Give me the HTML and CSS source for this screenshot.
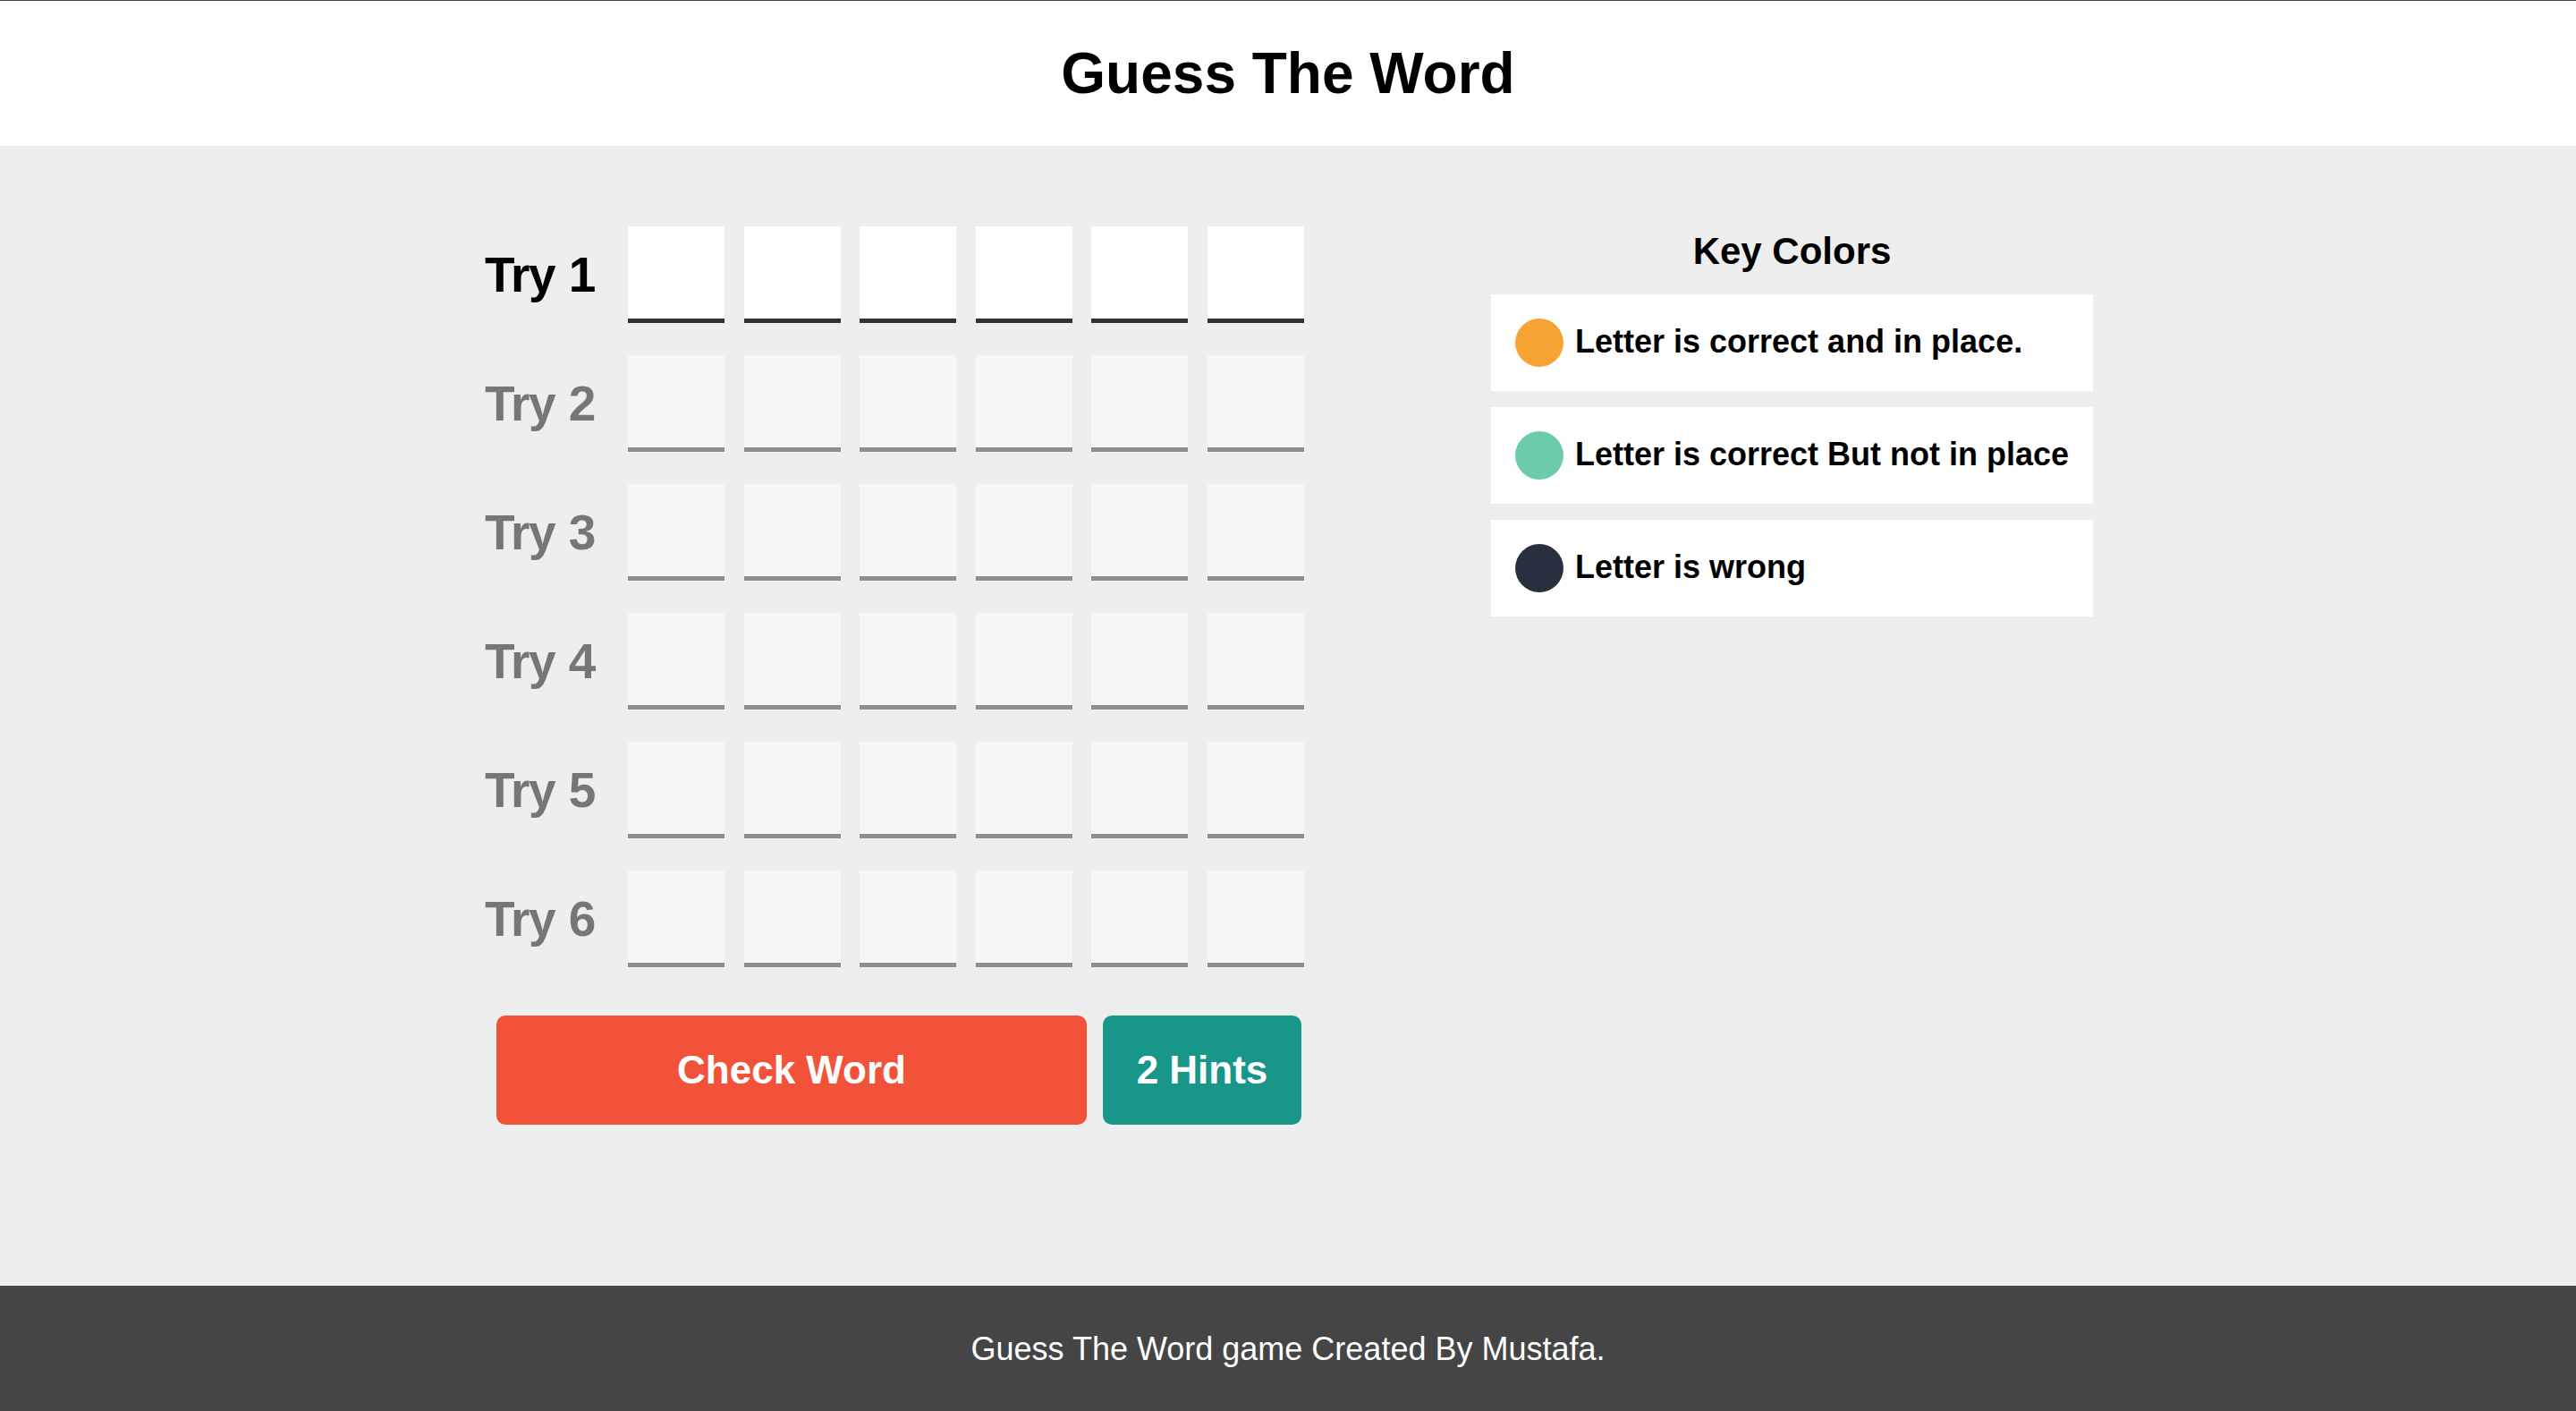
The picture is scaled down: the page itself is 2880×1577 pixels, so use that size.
FILE: index.html
```html
<!DOCTYPE html>
<html lang="en">
<head>
<meta charset="utf-8">
<title>Guess The Word</title>
<link rel="stylesheet" href="styles.css">
</head>
<body>
<header class="site-header">
  <h1 class="site-title">Guess The Word</h1>
</header>
<main class="game-main">
  <section class="game-area">
    <div class="inputs">
      <div class="try-row">
        <span class="try-label">Try 1</span>
        <div class="letters">
          <input class="letter" type="text" maxlength="1">
          <input class="letter" type="text" maxlength="1">
          <input class="letter" type="text" maxlength="1">
          <input class="letter" type="text" maxlength="1">
          <input class="letter" type="text" maxlength="1">
          <input class="letter" type="text" maxlength="1">
        </div>
      </div>
      <div class="try-row disabled">
        <span class="try-label">Try 2</span>
        <div class="letters">
          <input class="letter" type="text" maxlength="1" disabled>
          <input class="letter" type="text" maxlength="1" disabled>
          <input class="letter" type="text" maxlength="1" disabled>
          <input class="letter" type="text" maxlength="1" disabled>
          <input class="letter" type="text" maxlength="1" disabled>
          <input class="letter" type="text" maxlength="1" disabled>
        </div>
      </div>
      <div class="try-row disabled">
        <span class="try-label">Try 3</span>
        <div class="letters">
          <input class="letter" type="text" maxlength="1" disabled>
          <input class="letter" type="text" maxlength="1" disabled>
          <input class="letter" type="text" maxlength="1" disabled>
          <input class="letter" type="text" maxlength="1" disabled>
          <input class="letter" type="text" maxlength="1" disabled>
          <input class="letter" type="text" maxlength="1" disabled>
        </div>
      </div>
      <div class="try-row disabled">
        <span class="try-label">Try 4</span>
        <div class="letters">
          <input class="letter" type="text" maxlength="1" disabled>
          <input class="letter" type="text" maxlength="1" disabled>
          <input class="letter" type="text" maxlength="1" disabled>
          <input class="letter" type="text" maxlength="1" disabled>
          <input class="letter" type="text" maxlength="1" disabled>
          <input class="letter" type="text" maxlength="1" disabled>
        </div>
      </div>
      <div class="try-row disabled">
        <span class="try-label">Try 5</span>
        <div class="letters">
          <input class="letter" type="text" maxlength="1" disabled>
          <input class="letter" type="text" maxlength="1" disabled>
          <input class="letter" type="text" maxlength="1" disabled>
          <input class="letter" type="text" maxlength="1" disabled>
          <input class="letter" type="text" maxlength="1" disabled>
          <input class="letter" type="text" maxlength="1" disabled>
        </div>
      </div>
      <div class="try-row disabled">
        <span class="try-label">Try 6</span>
        <div class="letters">
          <input class="letter" type="text" maxlength="1" disabled>
          <input class="letter" type="text" maxlength="1" disabled>
          <input class="letter" type="text" maxlength="1" disabled>
          <input class="letter" type="text" maxlength="1" disabled>
          <input class="letter" type="text" maxlength="1" disabled>
          <input class="letter" type="text" maxlength="1" disabled>
        </div>
      </div>
    </div>
    <div class="control">
      <button class="btn btn-check" type="button">Check Word</button>
      <button class="btn btn-hint" type="button">2 Hints</button>
    </div>
  </section>
  <aside class="key-colors">
    <h2 class="key-title">Key Colors</h2>
    <div class="key-list">
      <div class="key-colors-item">
        <span class="key-dot dot-in-place"></span>
        <span class="key-text">Letter is correct and in place.</span>
      </div>
      <div class="key-colors-item">
        <span class="key-dot dot-not-in-place"></span>
        <span class="key-text">Letter is correct But not in place</span>
      </div>
      <div class="key-colors-item">
        <span class="key-dot dot-wrong"></span>
        <span class="key-text">Letter is wrong</span>
      </div>
    </div>
  </aside>
</main>
<footer class="site-footer">Guess The Word game Created By Mustafa.</footer>
</body>
</html>
```

FILE: styles.css
```css
* {
  box-sizing: border-box;
}

html, body {
  margin: 0;
  padding: 0;
}

body {
  font-family: "Liberation Sans", Arial, sans-serif;
  background-color: #eeeeee;
  color: #000;
  min-height: 100vh;
  display: flex;
  flex-direction: column;
}

.site-header {
  background-color: #ffffff;
  border-top: 1px solid #4a4a4a;
  height: 163px;
  display: flex;
  align-items: center;
  justify-content: center;
}

.site-title {
  margin: 0;
  font-size: 64px;
  font-weight: bold;
  line-height: 1;
  padding-top: 0;
}

.game-main {
  flex: 1;
  display: flex;
  justify-content: center;
  align-items: flex-start;
  gap: 209px;
  padding-top: 90px;
}

.game-area {
  width: 918px;
  flex: none;
}

.inputs {
  display: flex;
  flex-direction: column;
  gap: 36px;
}

.try-row {
  display: flex;
  align-items: center;
}

.try-row.disabled {
  opacity: 0.5;
}

.try-label {
  width: 162px;
  flex: none;
  font-size: 55px;
  font-weight: bold;
  line-height: 1;
  letter-spacing: -1.5px;
  word-spacing: 2px;
  padding-left: 2px;
}

.letters {
  display: flex;
  gap: 21.6px;
}

.letter {
  width: 108px;
  height: 108px;
  margin: 0;
  padding: 0;
  border: none;
  border-bottom: 5px solid #333333;
  border-radius: 0;
  background-color: #ffffff;
  font-family: inherit;
  font-size: 60px;
  font-weight: bold;
  text-align: center;
  color: #000;
  outline: none;
}

.control {
  display: flex;
  gap: 18px;
  margin-top: 54px;
  margin-left: 15px;
}

.btn {
  height: 122px;
  border: none;
  border-radius: 10px;
  color: #ffffff;
  font-family: inherit;
  font-size: 44px;
  font-weight: bold;
  padding: 0;
  cursor: pointer;
}

.btn-check {
  width: 660px;
  background-color: #f3523a;
}

.btn-hint {
  width: 222px;
  background-color: #18968a;
}

.key-colors {
  width: 673px;
  flex: none;
}

.key-title {
  margin: 4px 0 24px;
  font-size: 42px;
  font-weight: bold;
  line-height: 48px;
  text-align: center;
}

.key-list {
  display: flex;
  flex-direction: column;
  gap: 18px;
}

.key-colors-item {
  background-color: #ffffff;
  height: 108px;
  padding-left: 27px;
  display: flex;
  align-items: center;
  gap: 13px;
}

.key-dot {
  width: 54px;
  height: 54px;
  border-radius: 50%;
  flex: none;
}

.dot-in-place {
  background-color: #f7a333;
}

.dot-not-in-place {
  background-color: #6dcbad;
}

.dot-wrong {
  background-color: #28303f;
}

.key-text {
  font-size: 36px;
  font-weight: bold;
  padding-bottom: 2px;
}

.site-footer {
  background-color: #454545;
  color: #ffffff;
  height: 140px;
  padding-top: 2px;
  display: flex;
  align-items: center;
  justify-content: center;
  font-size: 36px;
}
```
